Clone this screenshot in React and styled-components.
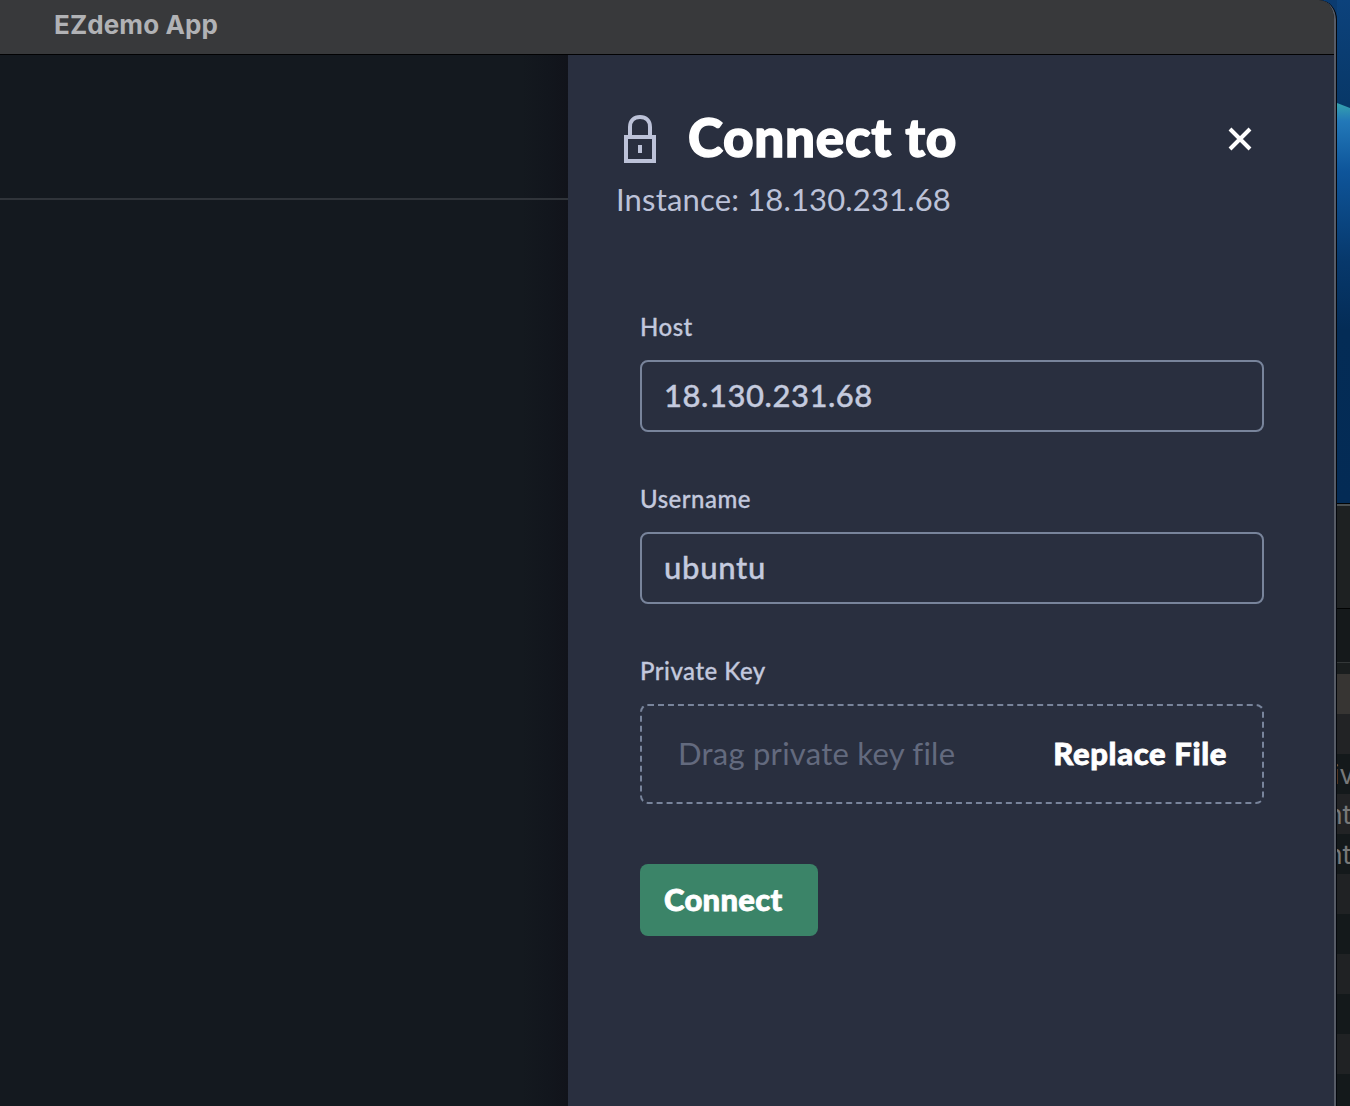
import React from "react";
import styled, { createGlobalStyle } from "styled-components";

const Global = createGlobalStyle`
  * { box-sizing: border-box; }
  body {
    margin: 0;
    background: #000;
    font-family: Lato, "Open Sans", sans-serif;
  }
`;

const Desktop = styled.div`
  display: grid;
  grid-template-columns: 1337px 13px;
  height: 1106px;
  overflow: hidden;
  background: #0b3b70;
`;

const Window = styled.main`
  display: flex;
  flex-direction: column;
  overflow: hidden;
  border-right: 1px solid #04070c;
  border-top-right-radius: 18px 20px;
  background: #14191f;
`;

const WindowBody = styled.div`
  flex: 1;
  display: flex;
  flex-direction: column;
  overflow: hidden;
  border-right: 2px solid #565b66;
  border-top-right-radius: 17px 19px;
`;

const TitleBar = styled.header`
  flex: none;
  display: flex;
  align-items: center;
  height: 55px;
  padding: 0 0 5px 54px;
  border-bottom: 1px solid #020203;
  background: #38393b;
`;

const AppName = styled.h1`
  margin: 0;
  font: 700 26px/32px Inter, sans-serif;
  letter-spacing: 0.1px;
  color: #b1b2b5;
`;

const Workspace = styled.div`
  flex: 1;
  display: flex;
`;

const Page = styled.section`
  flex: 1;
  background: linear-gradient(to left, #11131a 0, #12161d 20px, #14191f 46px);
`;

const PageHeader = styled.div`
  height: 145px;
  border-bottom: 2px solid #30343a;
`;

const Panel = styled.aside`
  width: 766px;
  padding: 60px 70px 0 48px;
  background: #292f3f;
`;

const PanelHeader = styled.div`
  display: flex;
  align-items: flex-start;
  height: 48px;
`;

const Icon = styled.svg`
  flex: none;
  width: 48px;
  height: 48px;
  fill: none;
  stroke: ${(p) => p.$color};
  stroke-width: 2;
`;

const PanelTitle = styled.h2`
  flex: 1;
  margin: 0 0 0 24px;
  font-size: 53px;
  font-weight: 900;
  line-height: 43px;
  letter-spacing: 0.7px;
  color: #fff;
  -webkit-text-stroke: 1.4px #fff;
`;

const CloseButton = styled.button`
  display: flex;
  padding: 0;
  border: 0;
  background: none;
`;

const Subtitle = styled.p`
  margin: 18px 0 0;
  font-size: 31px;
  line-height: 36px;
  letter-spacing: 0.16px;
  color: #bcc2d8;
`;

const Form = styled.form`
  display: flex;
  flex-direction: column;
  align-items: flex-start;
  gap: 55px;
  width: 624px;
  margin: 98px 0 0 24px;
`;

const Field = styled.label`
  display: flex;
  flex-direction: column;
  gap: 21px;
  width: 100%;
`;

const FieldLabel = styled.span`
  font-size: 24px;
  font-weight: 500;
  line-height: 24px;
  letter-spacing: 0.5px;
  color: #c2c8dd;
  -webkit-text-stroke: 0.3px #c2c8dd;
`;

const TextInput = styled.input`
  height: 72px;
  padding: 0 22px 2px;
  border: 2px solid #78849b;
  border-radius: 8px;
  outline: 0;
  background: none;
  font: 500 31px Lato, sans-serif;
  letter-spacing: ${(p) => p.$tracking};
  color: #c4cade;
  -webkit-text-stroke: 0.4px #c4cade;
`;

const DropZone = styled.div`
  display: flex;
  align-items: center;
  justify-content: space-between;
  height: 100px;
  padding: 0 35px 2px 36px;
  border: 2px dashed #78849b;
  border-radius: 8px;
  font-size: 31px;
  line-height: 36px;
`;

const DropHint = styled.span`
  letter-spacing: 0.25px;
  color: #636a7e;
`;

const BrowseAction = styled.span`
  font-weight: 900;
  letter-spacing: 0.65px;
  color: #fff;
  -webkit-text-stroke: 0.8px #fff;
`;

const SubmitButton = styled.button`
  width: 178px;
  height: 72px;
  margin-top: 5px;
  padding: 0 0 2px 24px;
  border: 0;
  border-radius: 8px;
  background: #3b8468;
  font: 900 31px/36px Lato, sans-serif;
  letter-spacing: 0.3px;
  text-align: left;
  color: #fff;
  -webkit-text-stroke: 0.8px #fff;
`;

const Backdrop = styled.div`
  display: flex;
  flex-direction: column;
`;

const Wallpaper = styled.div`
  flex: none;
  height: 503px;
  background: linear-gradient(#0c427c 0, #083868 103px, #042c56 330px, #042b55 100%);
`;

const Wave = styled.svg`
  display: block;
  width: 13px;
  height: 330px;
`;

const RearToolbar = styled.div`
  flex: none;
  height: ${(p) => p.$height}px;
  border-top: ${(p) => p.$edge}px solid ${(p) => p.$edgeColor};
  background: ${(p) => p.$fill};
`;

const RearRow = styled.div`
  flex: none;
  display: flex;
  justify-content: flex-end;
  align-items: center;
  height: 40px;
  overflow: hidden;
  background: ${(p) => p.$fill};
  font: 400 26px/40px Inter, sans-serif;
  padding-top: 2px;
  color: #777879;
`;

const RowText = styled.span`
  margin-right: ${(p) => p.$shift}px;
`;

const rearRows = [
  { fill: "#373533" },
  { fill: "#222325" },
  { fill: "#14191b", text: "iv", shift: -4 },
  { fill: "#222325", text: "nt", shift: -1 },
  { fill: "#14191b", text: "nt", shift: -1 },
  { fill: "#202224" },
  { fill: "#14191b" },
  { fill: "#202224" },
  { fill: "#14191b" },
  { fill: "#202224" },
  { fill: "#14191b" },
];

export default function App() {
  return (
    <>
      <Global />
      <Desktop>
        <Window>
          <WindowBody>
            <TitleBar>
              <AppName>EZdemo App</AppName>
            </TitleBar>
            <Workspace>
              <Page>
                <PageHeader />
              </Page>
              <Panel>
                <PanelHeader>
                  <Icon viewBox="0 0 24 24" $color="#bcc2d8">
                    <path d="M5 11h14v12H5zM7 11V6c0-3 2-5 5-5s5 2 5 5v5M12 15v4" />
                  </Icon>
                  <PanelTitle>Connect to</PanelTitle>
                  <CloseButton type="button" aria-label="Close">
                    <Icon viewBox="0 0 24 24" $color="#fff">
                      <path d="m7 7 10 10M7 17 17 7" />
                    </Icon>
                  </CloseButton>
                </PanelHeader>
                <Subtitle>Instance: 18.130.231.68</Subtitle>
                <Form>
                  <Field>
                    <FieldLabel>Host</FieldLabel>
                    <TextInput defaultValue="18.130.231.68" $tracking="0.55px" />
                  </Field>
                  <Field>
                    <FieldLabel>Username</FieldLabel>
                    <TextInput defaultValue="ubuntu" $tracking="0.7px" />
                  </Field>
                  <Field as="div">
                    <FieldLabel>Private Key</FieldLabel>
                    <DropZone>
                      <DropHint>Drag private key file</DropHint>
                      <BrowseAction>Replace File</BrowseAction>
                    </DropZone>
                  </Field>
                  <SubmitButton type="button">Connect</SubmitButton>
                </Form>
              </Panel>
            </Workspace>
          </WindowBody>
        </Window>
        <Backdrop>
          <Wallpaper>
            <Wave viewBox="0 0 13 330">
              <defs>
                <linearGradient id="wave" x1="0" y1="0" x2="0" y2="1">
                  <stop offset="0" stopColor="#36a3ae" />
                  <stop offset="0.08" stopColor="#2278b8" />
                  <stop offset="0.3" stopColor="#0e559a" />
                  <stop offset="0.7" stopColor="#07386b" />
                  <stop offset="1" stopColor="#042c56" />
                </linearGradient>
              </defs>
              <path d="M0 103 13 108V330H0z" fill="url(#wave)" />
            </Wave>
          </Wallpaper>
          <RearToolbar $height={1} $edge={1} $edgeColor="#030506" />
          <RearToolbar $height={104} $edge={2} $edgeColor="#4b5052" $fill="#1e2122" />
          <RearToolbar $height={54} $edge={1} $edgeColor="#020303" $fill="#15191b" />
          <RearToolbar $height={12} $edge={1} $edgeColor="#343839" $fill="#1a1e1f" />
          {rearRows.map((row, i) => (
            <RearRow key={i} $fill={row.fill}>
              {row.text && <RowText $shift={row.shift}>{row.text}</RowText>}
            </RearRow>
          ))}
        </Backdrop>
      </Desktop>
    </>
  );
}
